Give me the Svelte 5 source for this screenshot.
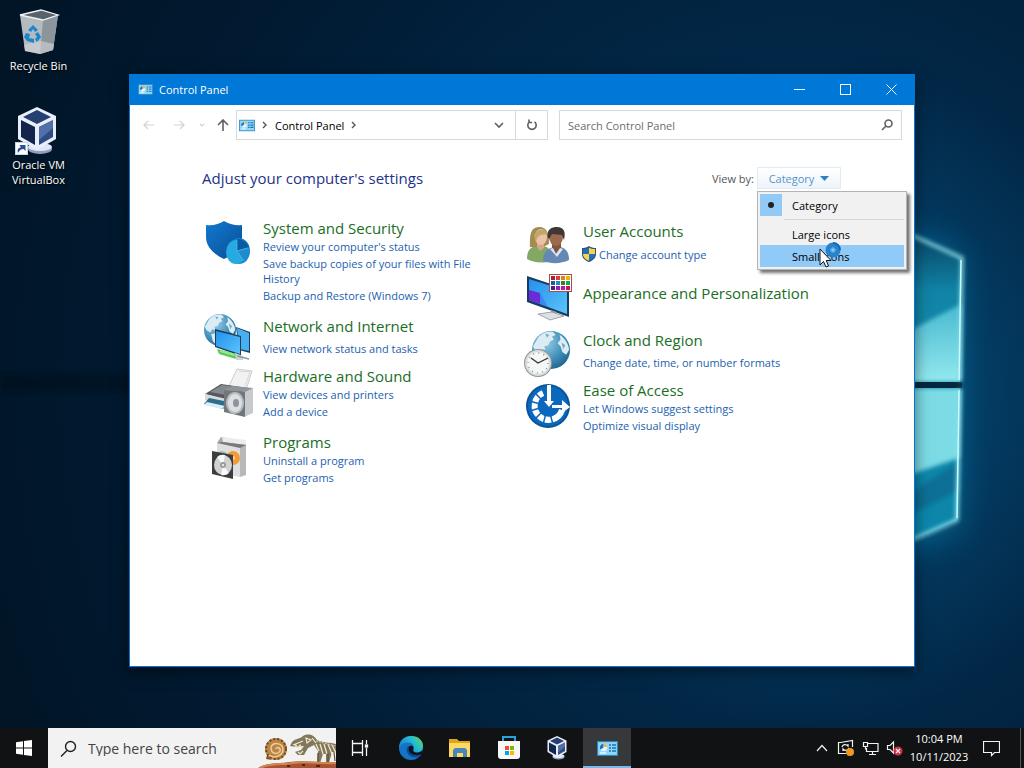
<script lang="ts">
	type Category = {
		icon: string;
		title: string;
		links: string[];
		shield?: boolean;
	};

	const left: Category[] = [
		{
			icon: 'security',
			title: 'System and Security',
			links: [
				"Review your computer's status",
				'Save backup copies of your files with File History',
				'Backup and Restore (Windows 7)'
			]
		},
		{ icon: 'network', title: 'Network and Internet', links: ['View network status and tasks'] },
		{
			icon: 'hardware',
			title: 'Hardware and Sound',
			links: ['View devices and printers', 'Add a device']
		},
		{ icon: 'programs', title: 'Programs', links: ['Uninstall a program', 'Get programs'] }
	];

	const right: Category[] = [
		{ icon: 'users', title: 'User Accounts', links: ['Change account type'], shield: true },
		{ icon: 'appearance', title: 'Appearance and Personalization', links: [] },
		{ icon: 'clock', title: 'Clock and Region', links: ['Change date, time, or number formats'] },
		{
			icon: 'ease',
			title: 'Ease of Access',
			links: ['Let Windows suggest settings', 'Optimize visual display']
		}
	];

	const swatches = [
		['#a3262a', '#e0393f', '#d08a1c', '#e5b80b'],
		['#2456a8', '#1b8fc4', '#3f7d20', '#17a55b'],
		['#4b1c8c', '#9b1fa0', '#b5179e', '#c2185b']
	];

	const spokes = [-15, 15, 45, 75, 105, 135];

	let view = $state('Category');
</script>

{#snippet panelIcon(width: number, height: number)}
	<svg {width} {height} viewBox="0 0 21 15" aria-hidden="true">
		<rect x="0.5" y="0.5" width="20" height="14" fill="#6fc6f2" stroke="#2f86bd" />
		<rect x="1.5" y="1.5" width="18" height="12" fill="#8fd8fa" />
		<circle cx="6.5" cy="6.5" r="3.7" fill="#e8f7ff" />
		<path d="M6.5 6.5V2.8A3.7 3.7 0 0 0 3.5 8.7Z" fill="#2176b8" />
		<path d="M7 6V2.4A3.7 3.7 0 0 1 10.4 6Z" fill="#f3b63c" />
		<path d="M12 4h2m1 0h4M12 7h2m1 0h4M12 10h2m1 0h4" stroke="#1c70ae" stroke-width="1.4" />
		<path d="M3 12h6" stroke="#fff" stroke-width="1.2" />
	</svg>
{/snippet}

{#snippet boxIcon(size: number)}
	<svg width={size} height={size} viewBox="0 0 48 48" aria-hidden="true">
		<ellipse cx="25" cy="42" rx="12" ry="5" fill="#8f9fc0" />
		<ellipse cx="25" cy="40" rx="12" ry="4" fill="#dfe7f5" />
		<path d="M22 0 41 9V32L22 43 3 32V9Z" fill="#e9effa" />
		<path d="M22 3 36 10 22 17 8 10Z" fill="#253f70" />
		<path d="M6 13 20 20V38L6 30Z" fill="#14254c" />
		<path d="M38 13 24 20V38L38 30Z" fill="#2e4c86" />
		<path d="M24 20 38 13V21L24 33Z" fill="#536fa7" />
	</svg>
{/snippet}

{#snippet uacShield()}
	<svg class="uac" width="14" height="16" viewBox="0 0 14 16" aria-hidden="true">
		<path d="M7 0C9 1.5 11.5 2 14 2V8C14 12 11 14.5 7 16 3 14.5 0 12 0 8V2C2.5 2 5 1.5 7 0Z" fill="#34516f" />
		<path d="M7 1.5V8H1V3C3.5 3 5.5 2.5 7 1.5Z" fill="#1f6fc4" />
		<path d="M7 1.5V8H13V3C10.5 3 8.5 2.5 7 1.5Z" fill="#fbd24a" />
		<path d="M1 8H7V14.7C3.5 13.5 1 11.5 1 8Z" fill="#fbd24a" />
		<path d="M13 8H7V14.7C10.5 13.5 13 11.5 13 8Z" fill="#1f6fc4" />
	</svg>
{/snippet}

{#snippet globe(cx: number, cy: number, r: number)}
	<g transform={`translate(${cx} ${cy}) scale(${r / 20})`}>
		<circle r="20" fill="url(#ocean)" />
		<path
			d="M-13 -14C-9 -18 -3 -20 2 -19L5 -16 1 -14 3 -11-1 -9-3 -5-7 -4-6 0-10 -1-12 3-17 0-19 -4ZM9 -16C14 -13 19 -6 19 0L16 5 12 2 10 -4 7 -7 10 -11ZM-11 5-5 4 0 8-2 13-5 18-9 14Z"
			fill="#dcecf4"
		/>
		<path d="M-6 -17 -2 -16 -4 -13Z M11 -8 15 -5 13 -1Z" fill="#6fa9c8" />
	</g>
{/snippet}

{#snippet categoryIcon(name: string)}
	<svg class="icon" width="48" height="48" viewBox="0 0 48 48" aria-hidden="true">
		{#if name === 'security'}
			<path d="M21 3C26 6 33 8 39 7V20C39 30 32 36 21 41 10 36 3 28 3 19V7C10 8 16 6 21 3Z" fill="url(#shield)" />
			<ellipse cx="36" cy="33" rx="11" ry="13" fill="#0f86cb" />
			<ellipse cx="33" cy="34" rx="10" ry="12" fill="#27a9e2" />
			<path d="M34 33V21A12 13 0 0 1 46 29Z" fill="#0b5ba2" />
			<path d="M34 33 46 30A12 13 0 0 1 41 43Z" fill="#1f8ccd" />
			<path d="M34 22V33L45 30M34 33 41 43" fill="none" stroke="#4fbdea" stroke-width="0.7" />
		{:else if name === 'network'}
			{@render globe(17, 14, 16)}
			<path d="M33 11 47 16V37L36 34Z" fill="#1e3e58" />
			<path d="M34 12 46 17V35L36 33Z" fill="#45b0f2" />
			<path d="M12 13 38 20V40L12 31Z" fill="#1e3e58" />
			<path d="M13 15 37 21V38L13 30Z" fill="url(#screen)" />
			<path d="M14 33 34 38 33 43 16 38Z" fill="#58c95a" />
			<path d="M17 34 32 38 31 40 17 36Z" fill="#9be595" />
			<path d="M32 37 40 40V44L33 44Z" fill="#cdd3d6" />
			<path d="M34 40 46 43" stroke="#8e999f" stroke-width="1.5" />
		{:else if name === 'hardware'}
			<path d="M26 20 34 3 49 5 43 24Z" fill="#f2f2f2" stroke="#bfc2c4" stroke-width="0.8" />
			<path d="M36 5 47 6 42 20" fill="none" stroke="#d4d7d9" />
			<path d="M2 28 18 18 45 22 28 35Z" fill="#55595d" />
			<path d="M7 26 19 19 40 22 28 30Z" fill="#85898d" />
			<path d="M2 28 28 34V42L2 34Z" fill="#d8dadc" />
			<path d="M6 32 26 36 20 43 1 38Z" fill="#2d6c8b" />
			<path d="M4 36 22 40 19 43 1 39Z" fill="#d6eef4" />
			<path d="M42 24 50 22V47L41 51Z" fill="#c6cacd" />
			<path d="M21 24 42 26V51L21 46Z" fill="#72777c" />
			<path d="M21 24 30 20 50 22 42 26Z" fill="#8f949a" />
			<ellipse cx="32" cy="37" rx="9" ry="11" fill="#b9bec3" />
			<ellipse cx="32" cy="37" rx="7" ry="9" fill="#dce0e3" />
			<ellipse cx="33" cy="37" rx="3" ry="4" fill="#8d949b" />
		{:else if name === 'programs'}
			<path d="M14 11 18 5 43 9V16Z" fill="#a7a9ab" />
			<path d="M19 5 43 8V13L20 10Z" fill="#ececec" />
			<path d="M14 11 37 15V45L14 41Z" fill="#dedfe0" />
			<path d="M37 15 43 12V43L37 45Z" fill="#b6b8ba" />
			<path d="M14 11 20 10 43 13 37 16Z" fill="#77797b" />
			<circle cx="19" cy="25" r="6" fill="#9cc79a" />
			<circle cx="30" cy="26" r="7" fill="#f39a35" />
			<circle cx="30" cy="26" r="2" fill="#fbd09b" />
			<path d="M9 19 30 23V47L9 42Z" fill="#3b3d3f" />
			<ellipse cx="20" cy="33" rx="9" ry="10" fill="#d0d2d3" />
			<path d="M20 33 14 25A9 10 0 0 1 22 23ZM20 33 26 41A9 10 0 0 1 18 43Z" fill="#fafafa" />
			<circle cx="20" cy="33" r="3" fill="#9a9da0" />
			<circle cx="20" cy="33" r="1" fill="#fff" />
		{:else if name === 'users'}
			<path d="M4 38C4 30 7 26 13 25H20C26 26 30 31 30 39 21 43 11 42 4 38Z" fill="#83a866" />
			<path d="M7 26C7 18 6 6 16 6 25 6 26 14 26 23L20 26H13Z" fill="#a58b52" />
			<path d="M14 20H21V27L17 30 14 26Z" fill="#d8a689" />
			<ellipse cx="18" cy="16" rx="6" ry="8" fill="#ebc2a6" />
			<path d="M11 15C12 8 23 6 25 13 20 14 14 12 13 22Z" fill="#c0a868" />
			<path d="M20 40C20 31 25 27 31 26H38C43 28 46 31 46 39 38 43 28 43 20 40Z" fill="#6488b4" />
			<path d="M29 22H38V28L33 32 29 28Z" fill="#83543d" />
			<path d="M30 27 33 33 37 27 40 28 34 36 27 28Z" fill="#dbe5ef" />
			<ellipse cx="33" cy="16" rx="7" ry="9" fill="#9b694c" />
			<path d="M25 17C23 8 29 6 34 6 41 6 43 11 41 19L39 14 29 13 26 18Z" fill="#3f3834" />
		{:else if name === 'appearance'}
			<path d="M4 5 46 19V46L4 31Z" fill="#183b62" />
			<path d="M6 8 44 20V43L6 29Z" fill="url(#screen)" />
			<path d="M6 19 17 22V33L6 29Z" fill="#6c2bd9" />
			<path d="M17 22 25 36 17 33Z" fill="#3563df" opacity="0.5" />
			<path d="M28 39 34 41V46H28Z" fill="#929ba3" />
			<path d="M15 43 29 41 41 45 27 49Z" fill="#dce1e4" stroke="#8b9298" stroke-width="0.8" />
			<rect x="26.5" y="3.5" width="22" height="17" fill="#fff" stroke="#ab4b4b" />
			{#each swatches as row, r}
				{#each row as color, c}
					<rect x={28 + c * 5} y={5 + r * 5} width="4" height="4" fill={color} />
				{/each}
			{/each}
		{:else if name === 'clock'}
			{@render globe(28, 20, 19)}
			<circle cx="15" cy="33" r="14" fill="#8f9497" />
			<circle cx="15" cy="33" r="13" fill="#d9dcde" />
			<circle cx="15" cy="33" r="11" fill="#f5f6f6" />
			<circle cx="15" cy="33" r="10" fill="none" stroke="#8f969a" stroke-width="1.5" stroke-dasharray="1 4.236" />
			<path d="M8 28 15 33 25 28" fill="none" stroke="#333" stroke-width="1.3" />
		{:else if name === 'ease'}
			<circle cx="25" cy="26" r="22" fill="#07549b" />
			<circle cx="25" cy="26" r="20" fill="#0a69bd" />
			<path d="M20 13A14 14 0 1 0 39 30" fill="none" stroke="#fff" stroke-width="6" />
			{#each spokes as angle}
				<path d="M25 36V46" stroke="#0a69bd" stroke-width="1.5" transform={`rotate(${angle} 25 26)`} />
			{/each}
			<path d="M24 5H28V21H31L26 27 21 21H24Z" fill="#fff" />
			<path d="M29 25H39V20L47 27 39 33V28H29Z" fill="#fff" />
		{/if}
	</svg>
{/snippet}

{#snippet category(item: Category)}
	<li class="category" class:compact={item.links.length === 1} class:alone={item.links.length === 0}>
		{@render categoryIcon(item.icon)}
		<div class="category-text">
			<h2><a href="#{item.icon}">{item.title}</a></h2>
			{#each item.links as link}
				<p class:with-shield={item.shield}>
					{#if item.shield}{@render uacShield()}{/if}
					<a href="#{item.icon}">{link}</a>
				</p>
			{/each}
		</div>
	</li>
{/snippet}

<!-- shared gradients -->
<svg class="defs" width="0" height="0" aria-hidden="true">
	<defs>
		<linearGradient id="shield" x1="0" y1="0" x2="1" y2="1">
			<stop offset="0" stop-color="#1279cf" />
			<stop offset="1" stop-color="#084e96" />
		</linearGradient>
		<linearGradient id="screen" x1="0" y1="0" x2="1" y2="1">
			<stop offset="0" stop-color="#2390ee" />
			<stop offset="1" stop-color="#5cc4fa" />
		</linearGradient>
		<radialGradient id="ocean" cx="0.35" cy="0.3" r="0.8">
			<stop offset="0" stop-color="#9ccfe6" />
			<stop offset="0.6" stop-color="#3f8fba" />
			<stop offset="1" stop-color="#1c5c86" />
		</radialGradient>
	</defs>
</svg>

<div class="desktop">
	<svg class="wallpaper" viewBox="0 0 1024 768" preserveAspectRatio="none" aria-hidden="true">
		<defs>
			<radialGradient id="sky" gradientUnits="userSpaceOnUse" cx="800" cy="390" r="840">
				<stop offset="0" stop-color="#07608f" />
				<stop offset="0.2" stop-color="#043e66" />
				<stop offset="0.4" stop-color="#022746" />
				<stop offset="0.7" stop-color="#011c35" />
				<stop offset="1" stop-color="#011527" />
			</radialGradient>
			<linearGradient id="pane-top" x1="0" y1="0" x2="0" y2="1">
				<stop offset="0" stop-color="#07405f" />
				<stop offset="0.4" stop-color="#1183a6" />
				<stop offset="1" stop-color="#158fae" />
			</linearGradient>
			<linearGradient id="pane-light" x1="0" y1="0" x2="0" y2="1">
				<stop offset="0" stop-color="#48b9d0" />
				<stop offset="1" stop-color="#93e9ee" />
			</linearGradient>
			<filter id="haze" x="-100%" y="-100%" width="300%" height="300%">
				<feGaussianBlur stdDeviation="16" />
			</filter>
			<filter id="soft" x="-50%" y="-50%" width="200%" height="200%">
				<feGaussianBlur stdDeviation="2" />
			</filter>
		</defs>
		<rect width="1024" height="768" fill="url(#sky)" />
		<path d="M0 374H900V392H0Z" fill="#000c18" opacity="0.4" filter="url(#soft)" />
		<path d="M880 230 958 250V530L880 550Z" fill="#0e86b4" opacity="0.6" filter="url(#haze)" />
		<path d="M900 230 962 258 960 382H900Z" fill="url(#pane-top)" />
		<path d="M900 336 961 304 960 382H900Z" fill="url(#pane-light)" filter="url(#soft)" />
		<path d="M900 388H960L958 520 900 545Z" fill="#0d86aa" />
		<path d="M900 388H960L959 458 900 478Z" fill="#7bdbe5" filter="url(#soft)" />
		<path d="M900 500 959 462V490L900 520Z" fill="#0a6f96" filter="url(#soft)" />
		<path d="M900 382H962V388H900Z" fill="#04283f" />
		<path d="M900 230 962 258 960 381M960 389 957 520 900 545" fill="none" stroke="#9df1f7" stroke-width="3" filter="url(#soft)" />
		<path d="M961 260 959 380M959 390 957 518" stroke="#c8fbfd" stroke-width="1.5" />
	</svg>

	<main class="workspace">
		<ul class="shortcuts">
			<li>
				<a href="#recycle">
					<svg width="48" height="48" viewBox="0 0 48 48" aria-hidden="true">
						<path d="M5 7 26 2 43 7 38 42 25 46 10 43Z" fill="#b4bbc0" />
						<path d="M5 7 26 2 43 7 28 12Z" fill="#59626a" />
						<path d="M28 12 43 7 38 42 25 46Z" fill="#8c959c" />
						<path d="M9 37 26 33 39 36 38 42 25 46 10 43Z" fill="#d3d5d7" opacity="0.6" />
						<path d="M5 7 26 2 43 7 28 12Z" fill="none" stroke="#eef1f3" stroke-width="1.3" />
						<path d="M13 22 18 17 23 22 20 24 18 21 16 24ZM23 24 26 29 22 34 20 31 22 29 20 26ZM11 25 15 26 14 30 19 31V35L12 33 9 29Z" fill="#1c85cc" />
					</svg>
					<span>Recycle Bin</span>
				</a>
			</li>
			<li>
				<a href="#virtualbox">
					<span class="shortcut-icon">
						{@render boxIcon(48)}
						<svg class="arrow" width="13" height="13" viewBox="0 0 13 13" aria-hidden="true">
							<rect x="0.5" y="0.5" width="12" height="12" fill="#fff" stroke="#cbd5e2" />
							<path d="M3 11C2 8 3 5.500 6 5.500L4.500 3H10.500V9L8.500 7C6 7 4.500 8.500 3 11Z" fill="#2a4f95" />
						</svg>
					</span>
					<span>Oracle VM VirtualBox</span>
				</a>
			</li>
		</ul>

		<section class="window" aria-label="Control Panel">
			<header class="titlebar">
				{@render panelIcon(15, 11)}
				<h1>Control Panel</h1>
				<button aria-label="Minimize">
					<svg width="11" height="11" viewBox="0 0 11 11"><path d="M0 5.5H11" /></svg>
				</button>
				<button aria-label="Maximize">
					<svg width="11" height="11" viewBox="0 0 11 11"><rect x="0.5" y="0.5" width="10" height="10" /></svg>
				</button>
				<button aria-label="Close">
					<svg width="11" height="11" viewBox="0 0 11 11"><path d="M0.5 0.5 10.5 10.5M10.5 0.5 0.5 10.5" /></svg>
				</button>
			</header>

			<nav class="toolbar" aria-label="Navigation">
				<button class="nav-button faded" aria-label="Back">
					<svg width="12" height="12" viewBox="0 0 12 12"><path d="M11 6H1M5 2 1 6 5 10" /></svg>
				</button>
				<button class="nav-button faded" aria-label="Forward">
					<svg width="12" height="12" viewBox="0 0 12 12"><path d="M1 6H11M7 2 11 6 7 10" /></svg>
				</button>
				<button class="nav-button faded narrow" aria-label="Recent locations">
					<svg width="6" height="6" viewBox="0 0 6 6"><path d="M1 2 3 4 5 2" /></svg>
				</button>
				<button class="nav-button up" aria-label="Up">
					<svg width="12" height="12" viewBox="0 0 12 12"><path d="M6 12V1M1 6 6 1 11 6" /></svg>
				</button>
				<div class="address">
					{@render panelIcon(16, 13)}
					<svg class="crumb" width="5" height="8" viewBox="0 0 5 8"><path d="M1 1 4 4 1 7" /></svg>
					<a href="#control-panel">Control Panel</a>
					<svg class="crumb" width="5" height="8" viewBox="0 0 5 8"><path d="M1 1 4 4 1 7" /></svg>
					<button class="history" aria-label="Previous locations">
						<svg width="10" height="7" viewBox="0 0 10 7"><path d="M1 1 5 5 9 1" /></svg>
					</button>
					<button class="refresh" aria-label="Refresh">
						<svg width="12" height="12" viewBox="0 0 12 12">
							<path d="M8.5 2.8A4.2 4.2 0 1 1 3.5 2.8M3 0.5V3.5H6.2" />
						</svg>
					</button>
				</div>
				<label class="search">
					<input type="text" placeholder="Search Control Panel" aria-label="Search Control Panel" />
					<svg width="12" height="12" viewBox="0 0 12 12"><circle cx="7.5" cy="4.5" r="3.5" /><path d="M5 7 1 11" /></svg>
				</label>
			</nav>

			<div class="content">
				<div class="heading">
					<p class="title">Adjust your computer's settings</p>
					<span class="view-label" id="view-label">View by:</span>
					<div class="view">
						<button class="view-button" aria-haspopup="menu" aria-labelledby="view-label">
							{view}
							<svg width="9" height="5" viewBox="0 0 9 5"><path d="M0 0H9L4.5 5Z" fill="#2f7fc9" /></svg>
						</button>
						<div class="menu" role="menu">
							<button role="menuitemradio" aria-checked="true" onclick={() => (view = 'Category')}>
								<span class="mark"></span>Category
							</button>
							<hr />
							<button role="menuitemradio" aria-checked="false" onclick={() => (view = 'Large icons')}>
								Large icons
							</button>
							<button class="active" role="menuitemradio" aria-checked="false" onclick={() => (view = 'Small icons')}>
								Small icons
							</button>
							<svg class="pointer" width="24" height="28" viewBox="0 0 24 28" aria-hidden="true">
								<circle cx="14" cy="9" r="5" fill="#8fcbf2" stroke="#2583d0" stroke-width="5" />
								<path d="M14 2A7 7 0 0 1 21 9" fill="none" stroke="#1669b8" stroke-width="2" />
								<circle cx="14" cy="9" r="2" fill="none" stroke="#4fa2de" />
								<path d="M1 8V24L4.5 20.5 7 26 9.5 25 7.2 19.500H12Z" fill="#fff" stroke="#111" />
							</svg>
						</div>
					</div>
				</div>

				<div class="columns">
					<ul>
						{#each left as item}
							{@render category(item)}
						{/each}
					</ul>
					<ul class="second">
						{#each right as item}
							{@render category(item)}
						{/each}
					</ul>
				</div>
			</div>
		</section>
	</main>

	<footer class="taskbar">
		<button class="start" aria-label="Start">
			<svg width="16" height="16" viewBox="0 0 16 16"><path d="M0 2.3 7 1.3V7.6H0ZM8 1.1 16 0V7.6H8ZM0 8.5H7V14.8L0 13.8ZM8 8.5H16V16L8 14.9Z" fill="#fff" /></svg>
		</button>
		<label class="task-search">
			<svg width="17" height="17" viewBox="0 0 17 17"><circle cx="10.5" cy="6.5" r="5" fill="none" stroke="#222" stroke-width="1.4" /><path d="M7 10.5 1 16.5" stroke="#222" stroke-width="1.4" /></svg>
			<input type="text" placeholder="Type here to search" aria-label="Type here to search" />
			<svg class="fossil" width="78" height="40" viewBox="0 0 78 40" aria-hidden="true">
				<circle cx="18" cy="21" r="11" fill="#b98548" />
				<path d="M9 27 8 31 14 32Z" fill="#8a4f25" />
				<circle cx="18" cy="21" r="10" fill="none" stroke="#714722" stroke-width="2" stroke-dasharray="2 2" />
				<path d="M18 21C19 18 23 20 22 23 20 27 13 26 13 20 14 14 24 14 25 21 25 28 16 31 11 27" fill="none" stroke="#f0cf94" stroke-width="1.5" />
				<path d="M34 14C38 10 42 11 45 8 51 5 56 7 59 12 64 15 72 14 78 16V24H74L71 35H68V26H65L62 35H59L60 23 56 17 50 20 46 27H40L37 24 43 22 46 18 38 19 32 18Z" fill="#81785b" />
				<path d="M35 17 45 13M36 20 38 17 40 20 42 17 44 20M40 24 42 26 45 23M48 10 53 12 49 15ZM54 10 58 15" fill="none" stroke="#f1ead2" stroke-width="1.2" />
				<path d="M58 16 61 23M62 16 65 26M66 16 69 26M70 16 74 26M74 17 78 25" stroke="#eee6ca" stroke-width="1.3" />
				<path d="M58 13 78 18" stroke="#d8cfae" stroke-dasharray="2 1" />
				<path d="M60 25V34M70 25V34M76 24 77 33" stroke="#5b5136" stroke-width="1.2" />
				<path d="M0 40C10 34 20 36 31 34 46 32 61 35 78 34V40Z" fill="#a65332" />
				<path d="M2 40C12 35 24 37 35 35 50 33 64 36 78 35" fill="none" stroke="#d18652" stroke-width="2" />
				<path d="M29 38h3M44 37h3M58 38h4" stroke="#4d2618" stroke-width="2" />
			</svg>
		</label>
		<button class="task-view" aria-label="Task View">
			<svg width="18" height="16" viewBox="0 0 18 16" fill="none" stroke="#f5f5f5" stroke-width="1.3">
				<path d="M1.5 0V3.5H11.5V0M1.5 16V12.5H11.5V16M1.5 3.5V12.5M11.5 3.5V12.5M15.5 0V4M15.5 8V16" />
				<rect x="14.5" y="5" width="2" height="2" fill="#fff" />
			</svg>
		</button>
		<div class="pinned">
			<button aria-label="Microsoft Edge">
				<svg width="24" height="24" viewBox="0 0 24 24">
					<defs>
						<linearGradient id="edge" x1="0" y1="0.5" x2="1" y2="0">
							<stop offset="0" stop-color="#1781d2" />
							<stop offset="0.5" stop-color="#23b8d5" />
							<stop offset="1" stop-color="#6bdd58" />
						</linearGradient>
					</defs>
					<circle cx="12" cy="12" r="12" fill="#1474c8" />
					<path d="M0 12C0 4 6 0 12 0 20 0 24 5 24 10 24 15 20 17 16 16 13 15 15 13 15 11 14 5 4 5 0 12Z" fill="url(#edge)" />
					<path d="M9 10C5 15 10 23 19 21 21 20 22 19 23 17 15 21 8 16 13 10Z" fill="#0b4b96" />
					<path d="M10 11C12 8 16 11 14 14 14 17 20 18 24 14L23 18C15 21 8 17 10 11Z" fill="#101214" />
				</svg>
			</button>
			<button aria-label="File Explorer">
				<svg width="22" height="20" viewBox="0 0 22 20">
					<path d="M0 1H8L10 3H21V7H0Z" fill="#dba520" />
					<path d="M0 5H21V19H0Z" fill="#ffd765" />
					<path d="M4 12 6 10H16L18 12V19H14V15H8V19H4Z" fill="#4387bd" />
				</svg>
			</button>
			<button aria-label="Microsoft Store">
				<svg width="24" height="24" viewBox="0 0 24 24">
					<path d="M6 6V1H18V6" fill="none" stroke="#27a5d8" stroke-width="2" />
					<path d="M1 5H23V20Q23 23 20 23H4Q1 23 1 20Z" fill="#f7f7f7" />
					<path d="M8 10h4v4h-4Z" fill="#f25022" /><path d="M13 10h4v4h-4Z" fill="#7fba00" />
					<path d="M8 15h4v4h-4Z" fill="#00a4ef" /><path d="M13 15h4v4h-4Z" fill="#ffb900" />
				</svg>
			</button>
			<button aria-label="Oracle VM VirtualBox">{@render boxIcon(24)}</button>
			<button class="running" aria-label="Control Panel">{@render panelIcon(21, 15)}</button>
		</div>
		<div class="tray">
			<button aria-label="Show hidden icons">
				<svg width="12" height="8" viewBox="0 0 12 8"><path d="M1 7 6 1.5 11 7" /></svg>
			</button>
			<button aria-label="Windows Update">
				<svg width="18" height="18" viewBox="0 0 18 18">
					<path d="M15.5 8V1.5L3.500 3.5H1.500V14.5H9M5 8C6 5 9 5 11 7V5M12 9C11 12 8 12 6 10V12" />
					<circle cx="13" cy="13" r="4" fill="#f29a1f" stroke="none" />
				</svg>
			</button>
			<button aria-label="Network">
				<svg width="17" height="15" viewBox="0 0 17 15"><path d="M6 2.5H16V10.5H4.5V7M7 13.5H14M10.5 10.5V13.5M1.5 1.5H5.5V5.5H1.5ZM3.5 5.5V8.5" /></svg>
			</button>
			<button aria-label="Volume muted">
				<svg width="17" height="16" viewBox="0 0 17 16">
					<path d="M1.5 5.5H4L7.5 2V13L4 9.5H1.5Z" />
					<circle cx="12" cy="11" r="4.5" fill="#cf3043" stroke="none" />
					<path d="M10 9 14 13M14 9 10 13" />
				</svg>
			</button>
			<button class="clock"><span>10:04 PM</span><span>10/11/2023</span></button>
			<button class="notifications" aria-label="Notifications">
				<svg width="17" height="17" viewBox="0 0 17 17"><path d="M0.5 1.5H16.5V12.5H11.5L8.5 15.5V12.5H0.5Z" /></svg>
			</button>
			<button class="show-desktop" aria-label="Show desktop"></button>
		</div>
	</footer>
</div>

<style>
	:global(body) {
		margin: 0;
	}

	.desktop {
		position: relative;
		display: flex;
		flex-direction: column;
		min-height: 100vh;
		overflow: hidden;
		background: #011c35;
		font-family: 'Open Sans', 'Noto Sans', sans-serif;
		font-size: 11px;
		line-height: 15px;
		color: #000;
	}

	.defs {
		position: absolute;
	}

	.wallpaper {
		position: absolute;
		inset: 0;
		width: 100%;
		height: 100%;
	}

	ul,
	p,
	h1,
	h2 {
		margin: 0;
		padding: 0;
		list-style: none;
		font-weight: 400;
	}

	a {
		color: inherit;
		text-decoration: none;
	}

	button {
		display: flex;
		align-items: center;
		justify-content: center;
		margin: 0;
		padding: 0;
		border: 0;
		background: none;
		color: inherit;
		font: inherit;
	}

	input {
		flex: 1;
		min-width: 0;
		padding: 0;
		border: 0;
		outline: 0;
		background: none;
		font: inherit;
	}

	.workspace {
		position: relative;
		flex: 1;
	}

	/* desktop shortcuts */
	.shortcuts {
		display: flex;
		flex-direction: column;
		gap: 34px;
		width: 77px;
		padding-top: 8px;
	}

	.shortcuts a {
		display: flex;
		flex-direction: column;
		align-items: center;
		gap: 2px;
		color: #fff;
		text-align: center;
		text-shadow: 1px 1px 2px #000;
	}

	.shortcut-icon {
		position: relative;
		display: flex;
	}

	.arrow {
		position: absolute;
		bottom: 0;
		left: 0;
	}

	/* window */
	.window {
		position: absolute;
		inset: 74px 109px 61px 129px;
		display: flex;
		flex-direction: column;
		border: 1px solid #0078d7;
		border-top: 0;
		background: #fff;
		box-shadow: 0 4px 14px rgba(0, 0, 0, 0.5);
	}

	.titlebar {
		display: flex;
		align-items: center;
		height: 31px;
		padding-left: 8px;
		background: #0078d7;
		color: #fff;
	}

	.titlebar h1 {
		flex: 1;
		padding-left: 6px;
		font-size: 11px;
	}

	.titlebar button {
		width: 46px;
		height: 31px;
	}

	.titlebar button svg {
		fill: none;
		stroke: #fff;
	}

	.toolbar {
		display: flex;
		align-items: center;
		height: 30px;
		padding: 5px 12px 0 4px;
	}

	.nav-button {
		width: 30px;
		height: 30px;
	}

	.nav-button svg {
		fill: none;
		stroke: #5f5f5f;
		stroke-width: 1.6;
	}

	.faded svg {
		stroke: #d2d2d2;
		stroke-width: 1.2;
	}

	.narrow {
		width: 16px;
	}

	.up {
		width: 26px;
	}

	.address,
	.search {
		display: flex;
		align-items: center;
		box-sizing: border-box;
		height: 30px;
		border: 1px solid #d9d9d9;
	}

	.address {
		flex: 11;
		padding-left: 2px;
	}

	.address svg.crumb {
		margin: 0 8px 0 7px;
		fill: none;
		stroke: #555;
		stroke-width: 1.4;
	}

	.history {
		width: 32px;
		height: 28px;
		margin-left: auto;
	}

	.refresh {
		width: 32px;
		height: 28px;
		border-left: 1px solid #d9d9d9;
	}

	.history svg,
	.refresh svg {
		fill: none;
		stroke: #5f5f5f;
		stroke-width: 1.6;
	}

	.search {
		flex: 12;
		min-width: 0;
		max-width: 343px;
		margin-left: 11px;
		padding: 0 8px;
	}

	.search input::placeholder {
		color: #6d6d6d;
		opacity: 1;
	}

	.search svg {
		fill: none;
		stroke: #5f5f5f;
		stroke-width: 1.6;
	}

	.content {
		flex: 1;
		padding: 27px 73px 40px 72px;
	}

	.heading {
		display: flex;
		align-items: center;
	}

	.title {
		flex: 1;
		color: #1d3287;
		font-size: 15px;
		line-height: 20px;
	}

	.view-label {
		padding-right: 3px;
		color: #555;
	}

	.view {
		position: relative;
	}

	.view-button {
		gap: 6px;
		box-sizing: border-box;
		width: 84px;
		height: 22px;
		border: 1px solid #e3ebf3;
		background: linear-gradient(#fff, #edf4fb);
		color: #5794cc;
	}

	.menu {
		position: absolute;
		top: 24px;
		left: 0;
		z-index: 2;
		box-sizing: border-box;
		width: 150px;
		padding: 2px;
		border: 1px solid #b4b4b4;
		background: #f1f1f1;
		box-shadow: 3px 3px 3px rgba(0, 0, 0, 0.55);
	}

	.menu button {
		position: relative;
		justify-content: flex-start;
		width: 100%;
		height: 22px;
		padding-left: 32px;
	}

	.menu .active {
		background: #91c9f7;
	}

	.menu hr {
		height: 1px;
		margin: 3px 0 3px 24px;
		border: 0;
		background: #d5d5d5;
	}

	.mark {
		position: absolute;
		left: 0;
		display: flex;
		align-items: center;
		justify-content: center;
		width: 22px;
		height: 22px;
		background: #91c9f7;
	}

	.mark::after {
		width: 6px;
		height: 6px;
		border-radius: 50%;
		background: #222;
		content: '';
	}

	.pointer {
		position: absolute;
		top: 49px;
		left: 61px;
	}

	.columns {
		display: grid;
		grid-template-columns: 320px 1fr;
		padding: 29px 0 0 1px;
	}

	.second {
		padding-top: 3px;
	}

	.category {
		display: flex;
		gap: 12px;
		min-height: 48px;
		margin-bottom: 11px;
	}

	.icon {
		flex: none;
		overflow: visible;
	}

	.category-text {
		max-width: 236px;
	}

	.category h2 {
		margin-bottom: 1px;
		color: #1a6e1f;
		font-size: 15px;
		line-height: 20px;
	}

	.category p {
		margin-bottom: 2px;
		color: #1c5fb0;
	}

	.compact {
		margin-bottom: 2px;
	}

	.compact h2 {
		margin-bottom: 5px;
	}

	.alone {
		align-items: center;
	}

	.alone .category-text {
		padding-bottom: 3px;
	}

	.with-shield {
		display: flex;
		align-items: center;
		gap: 3px;
	}

	.uac {
		margin-left: -1px;
	}

	/* taskbar */
	.taskbar {
		position: relative;
		display: flex;
		height: 40px;
		background: #101214;
		color: #fff;
	}

	.start,
	.task-view {
		width: 48px;
	}

	.task-search {
		display: flex;
		align-items: center;
		width: 276px;
		padding-left: 12px;
		background: #f2f2f2;
	}

	.task-search input {
		padding-left: 11px;
		font-size: 14px;
	}

	.task-search input::placeholder {
		color: #444;
		opacity: 1;
	}

	.fossil {
		flex: none;
	}

	.pinned {
		display: flex;
		gap: 1px;
		padding-left: 3px;
	}

	.pinned button {
		box-sizing: border-box;
		width: 48px;
	}

	.pinned .running {
		padding-top: 2px;
		border-bottom: 2px solid #76b9ed;
		background: #363839;
	}

	.tray {
		display: flex;
		margin-left: auto;
	}

	.tray button {
		width: 24px;
	}

	.tray svg {
		fill: none;
		stroke: #f2f2f2;
		stroke-width: 1.2;
	}

	.tray .clock {
		flex-direction: column;
		width: 66px;
		line-height: 18px;
	}

	.tray .notifications {
		width: 38px;
	}

	.tray .show-desktop {
		width: 4px;
		margin-left: 10px;
		border-left: 1px solid #55585a;
	}
</style>
